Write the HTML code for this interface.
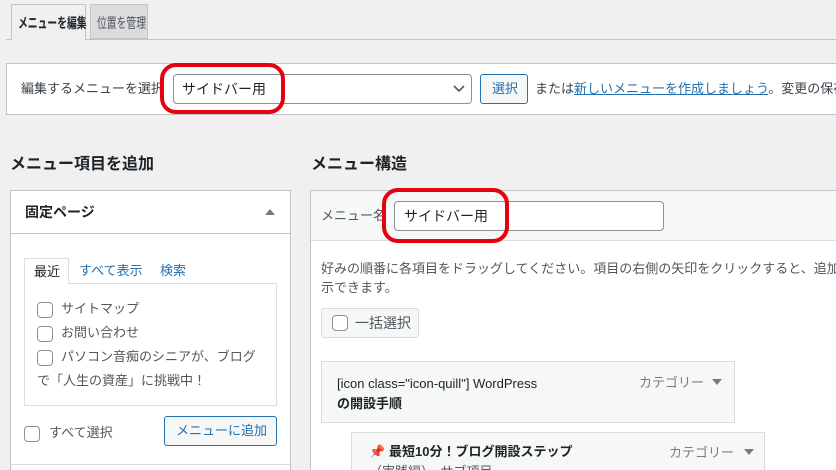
<!DOCTYPE html>
<html><head><meta charset="utf-8"><style>
*{box-sizing:border-box;margin:0;padding:0}
html,body{width:836px;height:470px;overflow:hidden}
body{background:#f0f0f1;font-family:"Liberation Sans","Noto Sans CJK JP",sans-serif;color:#1d2327;position:relative;font-size:13px;line-height:1.3}
.a{position:absolute;white-space:nowrap}
.cb{position:absolute;width:16px;height:16px;border:1px solid #8c8f94;border-radius:4px;background:#fff}
.red{position:absolute;border:4px solid #e60012;border-radius:16px}
.sq{display:inline-block;transform:scaleX(0.7);transform-origin:left}
</style></head><body>
<div class="a" style="left:6px;top:39px;width:830px;border-top:1px solid #c3c4c7"></div>
<div class="a" style="left:11px;top:4px;width:75px;height:36px;background:#f0f0f1;border:1px solid #c3c4c7;border-bottom:none;font-weight:bold;font-size:14px;padding:9px 0 0 6px"><span class="sq">メニューを編集</span></div>
<div class="a" style="left:90px;top:4px;width:58px;height:35px;background:#dcdcde;border:1px solid #c3c4c7;font-size:14px;padding:9px 0 0 6px;color:#50575e"><span class="sq">位置を管理</span></div>

<div class="a" style="left:6px;top:63px;width:840px;height:52px;background:#fff;border:1px solid #c3c4c7"></div>
<div class="a" style="left:21px;top:81px;color:#3c434a">編集するメニューを選択</div>
<div class="a" style="left:173px;top:74px;width:299px;height:30px;border:1px solid #8c8f94;border-radius:4px;background:#fff;padding:5px 0 0 8px;font-size:14px">サイドバー用</div>
<svg class="a" style="left:453px;top:84px" width="12" height="10"><path d="M1 2l5 5 5-5" stroke="#50575e" stroke-width="1.6" fill="none"/></svg>
<div class="a" style="left:480px;top:74px;width:48px;height:30px;border:1px solid #2271b1;border-radius:3px;background:#f6f7f7;color:#2271b1;padding:6px 0 0 11px">選択</div>
<div class="a" style="left:535px;top:81px;color:#3c434a">または<span style="color:#2271b1;text-decoration:underline">新しいメニューを作成しましょう</span>。変更の保存</div>
<div class="red" style="left:160px;top:63px;width:125px;height:51px"></div>

<div class="a" style="left:10px;top:155px;font-size:16px;font-weight:bold">メニュー項目を追加</div>
<div class="a" style="left:311px;top:155px;font-size:16px;font-weight:bold">メニュー構造</div>

<div class="a" style="left:10px;top:190px;width:281px;height:290px;background:#fff;border:1px solid #c3c4c7"></div>
<div class="a" style="left:11px;top:233px;width:279px;border-top:1px solid #c3c4c7"></div>
<div class="a" style="left:25px;top:203px;font-size:14px;font-weight:bold">固定ページ</div>
<svg class="a" style="left:265px;top:208px" width="10" height="7"><path d="M0 7L5 1l5 6z" fill="#787c82"/></svg>
<div class="a" style="left:24px;top:258px;width:45px;height:26px;border:1px solid #dcdcde;border-bottom:none;background:#fff;padding:5px 0 0 9px;z-index:2">最近</div>
<div class="a" style="left:79px;top:263px;color:#2271b1">すべて表示</div>
<div class="a" style="left:160px;top:263px;color:#2271b1">検索</div>
<div class="a" style="left:24px;top:283px;width:253px;height:123px;border:1px solid #dcdcde"></div>
<div class="cb" style="left:37px;top:302px"></div><div class="a" style="left:61px;top:301px;color:#50575e">サイトマップ</div>
<div class="cb" style="left:37px;top:326px"></div><div class="a" style="left:61px;top:325px;color:#50575e">お問い合わせ</div>
<div class="cb" style="left:37px;top:350px"></div><div class="a" style="left:61px;top:349px;color:#50575e">パソコン音痴のシニアが、ブログ</div>
<div class="a" style="left:37px;top:373px;color:#50575e">で「人生の資産」に挑戦中！</div>
<div class="cb" style="left:24px;top:426px"></div><div class="a" style="left:49px;top:425px;color:#50575e">すべて選択</div>
<div class="a" style="left:164px;top:416px;width:113px;height:30px;border:1px solid #2271b1;border-radius:3px;background:#f6f7f7;color:#2271b1;padding:6px 0 0 11px">メニューに追加</div>
<div class="a" style="left:11px;top:464px;width:279px;border-top:1px solid #dcdcde"></div>

<div class="a" style="left:310px;top:190px;width:540px;height:290px;background:#fff;border:1px solid #c3c4c7"></div>
<div class="a" style="left:311px;top:191px;width:530px;height:50px;background:#f6f7f7;border-bottom:1px solid #dcdcde"></div>
<div class="a" style="left:321px;top:208px;color:#50575e">メニュー名</div>
<div class="a" style="left:394px;top:201px;width:270px;height:30px;border:1px solid #8c8f94;border-radius:4px;background:#fff;padding:5px 0 0 9px;font-size:14px">サイドバー用</div>
<div class="red" style="left:382px;top:188px;width:127px;height:55px"></div>
<div class="a" style="left:321px;top:259px;color:#50575e;line-height:19px">好みの順番に各項目をドラッグしてください。項目の右側の矢印をクリックすると、追加の<br>示できます。</div>
<div class="a" style="left:321px;top:308px;width:98px;height:30px;border:1px solid #dcdcde;border-radius:3px;background:#f6f7f7"></div>
<div class="cb" style="left:332px;top:315px"></div><div class="a" style="left:355px;top:314px;color:#50575e;font-size:14px">一括選択</div>
<div class="a" style="left:321px;top:361px;width:414px;height:62px;background:#f6f7f7;border:1px solid #dcdcde"></div>
<div class="a" style="left:337px;top:374px;line-height:20px;font-size:13px">[icon class="icon-quill"] WordPress<br><b>の開設手順</b></div>
<div class="a" style="left:639px;top:375px;color:#787c82">カテゴリー</div>
<svg class="a" style="left:712px;top:379px" width="10" height="7"><path d="M0 0h10L5 6z" fill="#787c82"/></svg>
<div class="a" style="left:351px;top:432px;width:414px;height:50px;background:#f6f7f7;border:1px solid #dcdcde"></div>
<div class="a" style="left:369px;top:444px;color:#d63638">📌</div>
<div class="a" style="left:389px;top:444px;font-weight:bold">最短10分！ブログ開設ステップ</div>
<div class="a" style="left:669px;top:445px;color:#787c82">カテゴリー</div>
<svg class="a" style="left:744px;top:449px" width="10" height="7"><path d="M0 0h10L5 6z" fill="#787c82"/></svg>
<div class="a" style="left:369px;top:464px;color:#50575e">（実践編）　サブ項目</div>
</body></html>
